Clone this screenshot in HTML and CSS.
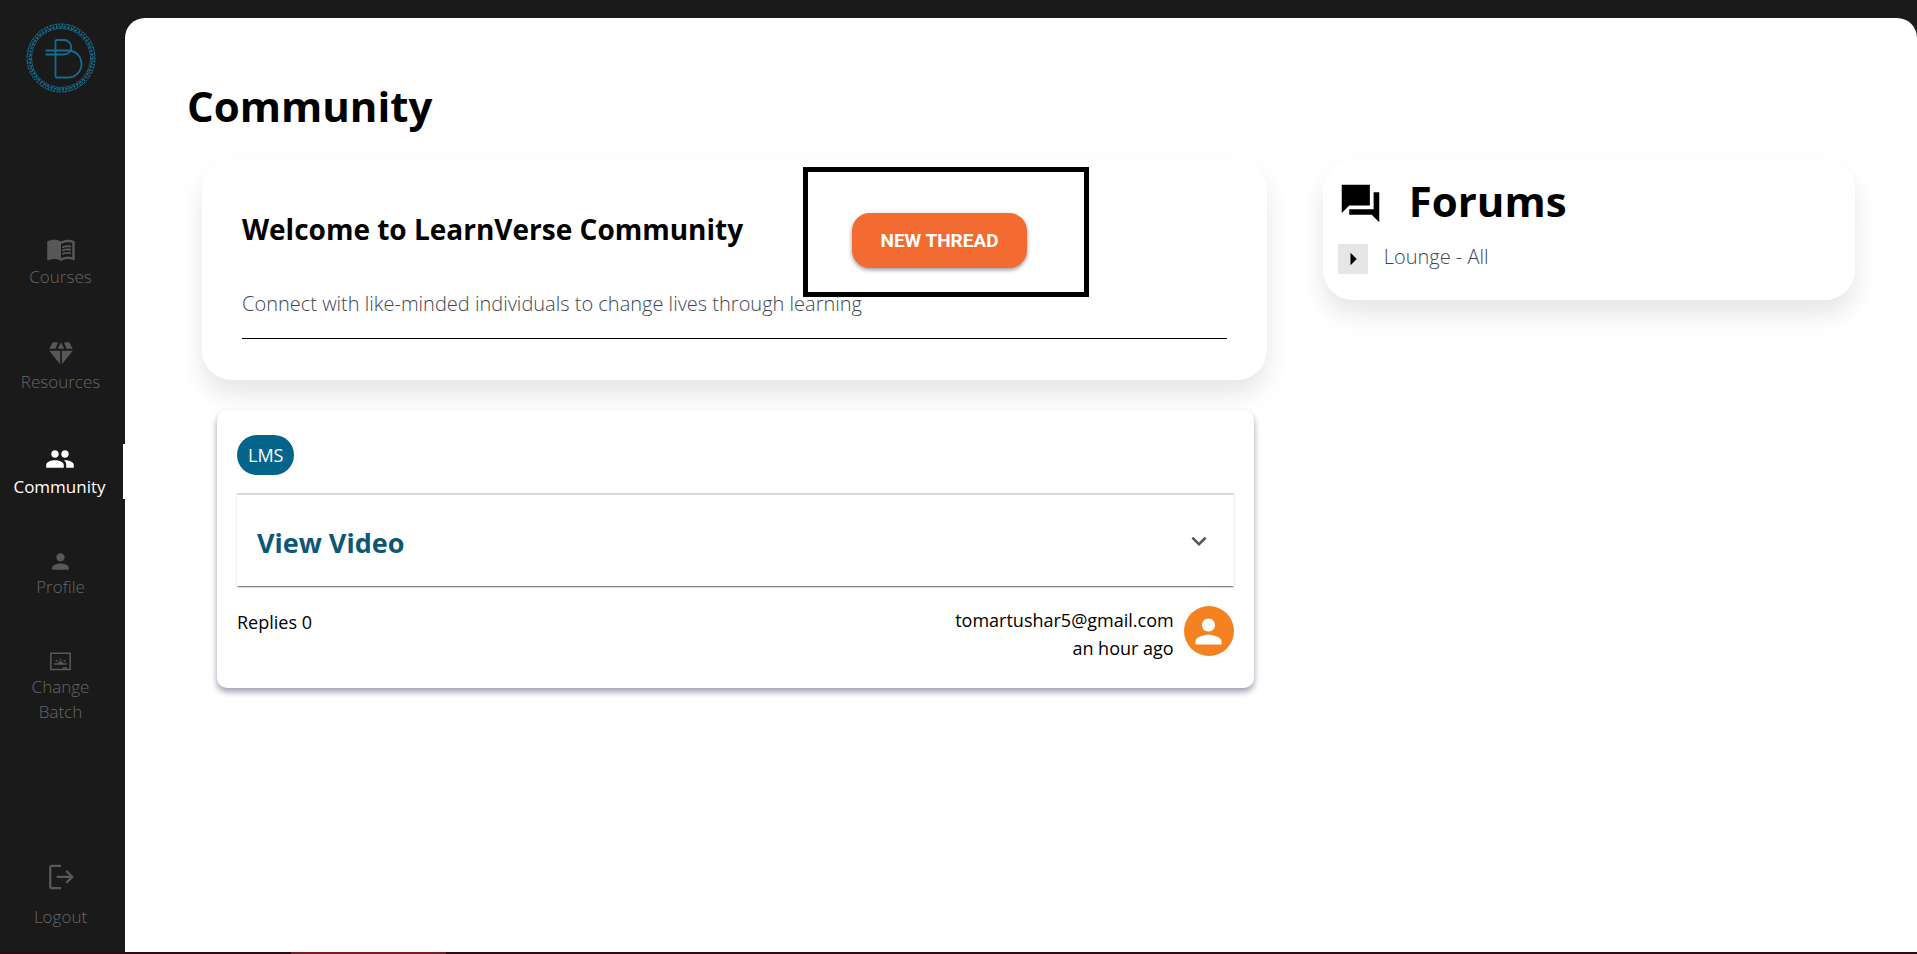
FILE: index.html
```html
<!DOCTYPE html>
<html lang="en">
<head>
<meta charset="utf-8">
<meta name="viewport" content="width=device-width, initial-scale=1">
<title>LearnVerse Community</title>
<link rel="stylesheet" href="styles.css">
</head>
<body>
<div class="app">
  <aside class="sidebar">
    <a class="logo" href="#" aria-label="Home">
      <svg viewBox="0 0 72 72" width="72" height="72" fill="none" stroke="currentColor">
        <circle cx="36" cy="36" r="34" stroke-width="1" stroke-dasharray="5 0.9"/>
        <circle cx="36" cy="36" r="29.4" stroke-width="1" stroke-dasharray="4.4 0.8"/>
        <circle cx="36" cy="36" r="32.3" stroke-width="2.6" stroke-dasharray="0.9 2.1"/>
        <circle cx="36" cy="36" r="31" stroke-width="1.6" stroke-dasharray="2.4 1.4"/>
        <path stroke-width="1.8" d="M30.5 18V55.5M30.5 18H39a7 7 0 0 1 0 14.5H20.500M20.500 28.500H43a13.500 13.500 0 0 1 0 27H30.500"/>
      </svg>
    </a>
    <nav class="nav" aria-label="Main">
      <a class="nav-item" href="#">
        <svg class="icon" viewBox="0 0 24 24"><path d="M21 5c-1.11-.35-2.33-.5-3.5-.5-1.95 0-4.05.4-5.5 1.5-1.45-1.1-3.55-1.5-5.5-1.5S2.45 4.9 1 6v14.65c0 .25.25.5.5.5.1 0 .15-.05.25-.05C3.1 20.45 5.05 20 6.5 20c1.95 0 4.05.4 5.5 1.5 1.35-.85 3.8-1.5 5.5-1.5 1.65 0 3.35.3 4.75 1.05.1.05.15.05.25.05.25 0 .5-.25.5-.5V6c-.6-.45-1.25-.75-2-1zm0 13.5c-1.1-.35-2.3-.5-3.5-.5-1.7 0-4.15.65-5.5 1.5V8c1.35-.85 3.8-1.5 5.5-1.5 1.2 0 2.4.15 3.5.5v11.5z"/><path d="M17.5 10.5c.88 0 1.73.09 2.5.26V9.24c-.79-.15-1.64-.24-2.5-.24-1.7 0-3.24.29-4.5.83v1.66c1.13-.64 2.7-.99 4.5-.99zM13 12.49v1.66c1.13-.64 2.7-.99 4.5-.99.88 0 1.73.09 2.5.26V11.9c-.79-.15-1.64-.24-2.5-.24-1.7 0-3.24.3-4.5.83zM17.5 14.33c-1.7 0-3.24.29-4.5.83v1.66c1.13-.64 2.7-.99 4.5-.99.88 0 1.73.09 2.5.26v-1.52c-.79-.16-1.64-.24-2.5-.24z"/></svg>
        <span>Courses</span>
      </a>
      <a class="nav-item" href="#">
        <svg class="icon" viewBox="0 0 24 24"><path d="M5.400 2.600H9.600L7.600 7.800H2.600zM14.400 2.600h4.200l2.800 5.200h-5zM12 2.600l2.600 5.200H9.400zM2.600 9.400h8.700v10.800zM12.700 9.400h8.700l-8.700 10.800z"/></svg>
        <span>Resources</span>
      </a>
      <a class="nav-item active" href="#" aria-current="page">
        <svg class="icon" viewBox="0 0 24 24"><path d="M16 11c1.66 0 2.99-1.34 2.99-3S17.66 5 16 5c-1.66 0-3 1.34-3 3s1.34 3 3 3zm-8 0c1.66 0 2.99-1.34 2.99-3S9.66 5 8 5C6.34 5 5 6.34 5 8s1.34 3 3 3zm0 2c-2.33 0-7 1.17-7 3.5V19h14v-2.5c0-2.33-4.67-3.5-7-3.5zm8 0c-.29 0-.62.02-.97.05 1.16.84 1.97 1.97 1.97 3.45V19h6v-2.5c0-2.33-4.67-3.5-7-3.5z"/></svg>
        <span>Community</span>
      </a>
      <a class="nav-item" href="#">
        <svg class="icon small" viewBox="0 0 24 24"><path d="M12 12c2.21 0 4-1.79 4-4s-1.79-4-4-4-4 1.79-4 4 1.79 4 4 4zm0 2c-2.67 0-8 1.34-8 4v2h16v-2c0-2.66-5.33-4-8-4z"/></svg>
        <span>Profile</span>
      </a>
      <a class="nav-item" href="#">
        <svg class="icon small" viewBox="0 0 24 24"><path fill="none" stroke="currentColor" stroke-width="1.5" d="M2.7 4h18.600v15.600H2.700z"/><path d="M6 13.600h12v1.600H6zM7.400 10.600H9v1.600H7.400zM11.200 9.400h1.600V11h-1.600zM15 10.600h1.600v1.600H15zM10 12h4v1.800h-4zM14 17.400h4.400v1.600H14z"/></svg>
        <span>Change Batch</span>
      </a>
    </nav>
    <a class="nav-item logout" href="#">
      <svg class="icon line" viewBox="0 0 24 24"><path d="M12 3H4.600a1.200 1.200 0 0 0-1.200 1.200v15.400a1.200 1.200 0 0 0 1.200 1.200H12M8.500 11.900h12M16.200 7.100l4.800 4.800-4.800 4.800"/></svg>
      <span>Logout</span>
    </a>
  </aside>

  <main class="main">
    <h1 class="title">Community</h1>
    <div class="columns">
      <div class="feed">
        <section class="card welcome">
          <div class="welcome-head">
            <h2 class="welcome-title">Welcome to LearnVerse Community</h2>
            <div class="cta"><button class="new-thread" type="button">NEW THREAD</button></div>
          </div>
          <p class="tagline">Connect with like-minded individuals to change lives through learning</p>
        </section>
        <article class="thread">
          <span class="tag">LMS</span>
          <button class="accordion" type="button" aria-expanded="false">
            <span>View Video</span>
            <svg class="icon" viewBox="0 0 24 24"><path d="M16.59 8.59 12 13.17 7.41 8.59 6 10l6 6 6-6z"/></svg>
          </button>
          <footer class="thread-foot">
            <span class="replies">Replies 0</span>
            <div class="author">
              <div class="author-text">
                <div>tomartushar5@gmail.com</div>
                <div>an hour ago</div>
              </div>
              <span class="avatar"><svg viewBox="0 0 24 24"><path d="M12 12c2.21 0 4-1.79 4-4s-1.79-4-4-4-4 1.79-4 4 1.79 4 4 4zm0 2c-2.67 0-8 1.34-8 4v2h16v-2c0-2.66-5.33-4-8-4z"/></svg></span>
            </div>
          </footer>
        </article>
      </div>
      <section class="card forums">
        <div class="forums-head">
          <svg class="forums-icon" viewBox="0 0 24 24"><path d="M22 6h-3v9H6v3h12l4 4V6zm-5 7V2H2v15l4-4h11z"/></svg>
          <h2 class="forums-title">Forums</h2>
        </div>
        <div class="forum-row">
          <button class="expand" type="button" aria-label="Expand Lounge"><svg class="icon" viewBox="0 0 24 24"><path d="m10 17 5-5-5-5v10z"/></svg></button>
          <a class="forum-link" href="#">Lounge - All</a>
        </div>
      </section>
    </div>
  </main>
  <div class="strip"><span></span></div>
</div>
</body>
</html>
```
FILE: styles.css
```css
* { box-sizing: border-box; }
body {
  margin: 0;
  background: #1a1a1a;
  color: #000;
  font-family: "Open Sans", "Noto Sans", sans-serif;
  font-size: 18px;
  line-height: 28px;
}
h1, h2, p { margin: 0; }
a { color: inherit; text-decoration: none; }
button { border: 0; padding: 0; font: inherit; color: inherit; cursor: pointer; }
svg { display: block; fill: currentColor; flex: none; }

.app {
  min-height: 100vh;
  display: grid;
  grid-template-columns: 125px 1fr;
  grid-template-rows: 1fr 2px;
}
.sidebar {
  display: flex;
  flex-direction: column;
  align-items: stretch;
  padding: 22px 0 23px;
}
.logo { align-self: center; color: #146d8f; padding-right: 3px; }
.logo svg { fill: none; }
.nav {
  display: flex;
  flex-direction: column;
  gap: 50px;
  margin-top: 140px;
}
.nav-item {
  display: flex;
  flex-direction: column;
  align-items: center;
  padding: 0 24px 0 20px;
  color: #666;
  font-size: 17px;
  font-weight: 300;
  line-height: 25px;
  text-align: center;
}
.nav-item .icon { color: #585858; }
.nav-item.active { color: #fff; border-right: 2px solid #fff; font-weight: 400; padding: 0 22px 0 18px; }
.nav-item.active .icon { color: #fff; }
.icon { width: 30px; height: 30px; }
.icon.small { width: 25px; height: 25px; }
.icon.line { fill: none; stroke: currentColor; stroke-width: 1.8; }
.logout { margin-top: auto; gap: 12px; }

.main {
  margin-top: 18px;
  padding: 62px 62px 40px;
  background: #fff;
  border-radius: 20px 20px 0 0;
}
.title { font-size: 42px; line-height: 52px; font-weight: 700; }
.columns {
  display: grid;
  grid-template-columns: 2fr 1fr;
  gap: 56px;
  align-items: start;
  padding-left: 15px;
  margin-top: 28px;
}
.card {
  background: #fff;
  border-radius: 30px;
  box-shadow: 0 14px 24px rgba(0, 0, 0, 0.1);
}
.welcome { padding: 49px 40px 41px; }
.welcome-head { display: grid; grid-template-columns: 62% 38%; }
.welcome-title { font-size: 28px; line-height: 40px; font-weight: 700; white-space: nowrap; }
.cta { position: relative; justify-self: start; margin-top: 4px; }
.cta::after {
  content: "";
  position: absolute;
  inset: -46px -62px -29px -49px;
  border: 5px solid #000;
  pointer-events: none;
}
.new-thread {
  height: 55px;
  padding: 0 28px;
  border-radius: 18px;
  background: #f36b30;
  color: #fff;
  font-family: Roboto, sans-serif;
  font-size: 19px;
  font-weight: 700;
  box-shadow: 0 2px 4px rgba(0, 0, 0, 0.4);
}
.tagline {
  margin-top: 22px;
  padding-bottom: 20px;
  border-bottom: 1px solid #000;
  color: #3d4852;
  font-size: 20px;
  font-weight: 300;
}
.thread {
  margin: 30px 13px 0 15px;
  padding: 25px 20px 26px;
  background: #fff;
  border-radius: 10px;
  box-shadow: 0 4px 6px rgba(10, 15, 60, 0.4);
}
.tag {
  display: inline-block;
  padding: 0 11px;
  border-radius: 20px;
  background: #03658c;
  color: #fff;
  line-height: 40px;
}
.accordion {
  display: flex;
  align-items: center;
  justify-content: space-between;
  width: 100%;
  height: 93px;
  margin-top: 18px;
  padding: 0 20px;
  background: #fff;
  border-top: 2px solid #dadada;
  box-shadow: 0 2px 1px -1px rgba(0, 0, 0, 0.4), 0 1px 2px rgba(0, 0, 0, 0.2);
  color: #0d5675;
  font-size: 27px;
  font-weight: 700;
}
.accordion span { padding-top: 4px; }
.accordion .icon { color: #555; }
.thread-foot { display: flex; justify-content: space-between; margin-top: 20px; }
.replies { padding-top: 2px; }
.author { display: flex; gap: 10px; text-align: right; }
.avatar {
  display: grid;
  place-items: center;
  width: 50px;
  height: 50px;
  border-radius: 50%;
  background: #f58220;
  color: #fff;
}
.avatar svg { width: 39px; height: 39px; }
.forums { padding: 14px 15px 26px; }
.forums-head { display: flex; align-items: center; gap: 26px; }
.forums-icon { width: 45px; height: 45px; }
.forums-title { font-size: 42px; line-height: 54px; padding-bottom: 4px; font-weight: 700; }
.forum-row { display: flex; align-items: center; gap: 16px; margin-top: 12px; }
.expand { background: #e6e6e6; }
.forum-link { color: #3d4852; font-size: 20px; line-height: 26px; font-weight: 300; padding-bottom: 4px; }
.strip { grid-column: 1 / -1; display: grid; grid-template-columns: 291px 155px 1fr; background: #350810; }
.strip span { grid-column: 2; background: #7a1a22; }
```
